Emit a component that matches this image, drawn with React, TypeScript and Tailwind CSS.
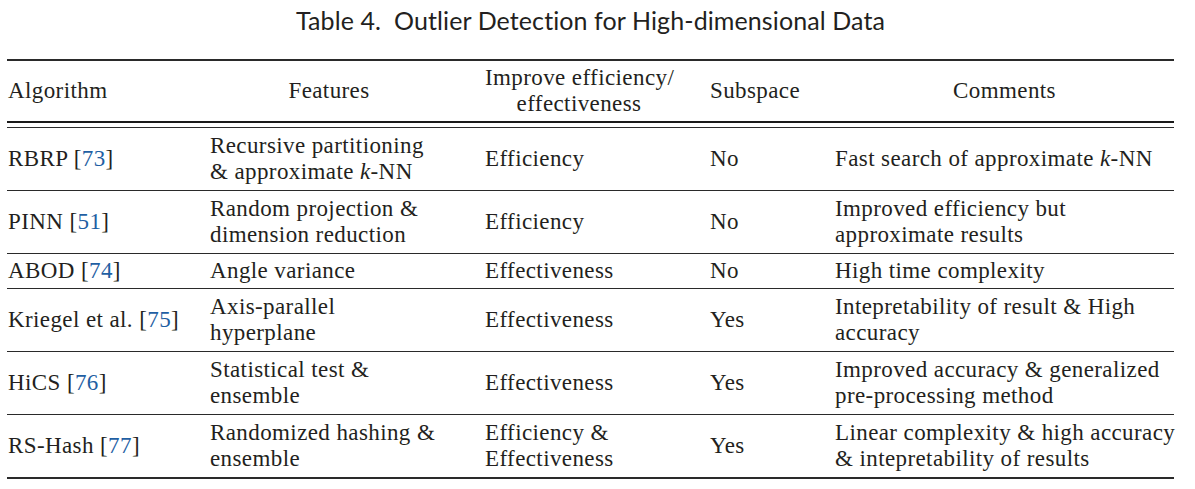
const rows = [
  {
    alg: "RBRP",
    ref: "73",
    feat: ["Recursive partitioning", <>&amp; approximate <i>k</i>-NN</>],
    imp: ["Efficiency"],
    sub: "No",
    com: [<>Fast search of approximate <i>k</i>-NN</>],
  },
  {
    alg: "PINN",
    ref: "51",
    feat: ["Random projection &", "dimension reduction"],
    imp: ["Efficiency"],
    sub: "No",
    com: ["Improved efficiency but", "approximate results"],
  },
  {
    alg: "ABOD",
    ref: "74",
    feat: ["Angle variance"],
    imp: ["Effectiveness"],
    sub: "No",
    com: ["High time complexity"],
  },
  {
    alg: "Kriegel et al.",
    ref: "75",
    feat: ["Axis-parallel", "hyperplane"],
    imp: ["Effectiveness"],
    sub: "Yes",
    com: ["Intepretability of result & High", "accuracy"],
  },
  {
    alg: "HiCS",
    ref: "76",
    feat: ["Statistical test &", "ensemble"],
    imp: ["Effectiveness"],
    sub: "Yes",
    com: ["Improved accuracy & generalized", "pre-processing method"],
  },
  {
    alg: "RS-Hash",
    ref: "77",
    feat: ["Randomized hashing &", "ensemble"],
    imp: ["Efficiency &", "Effectiveness"],
    sub: "Yes",
    com: ["Linear complexity & high accuracy", "& intepretability of results"],
  },
];

function Lines({ items }: { items: React.ReactNode[] }) {
  return (
    <div>
      {items.map((t, i) => (
        <div key={i} className="whitespace-nowrap">
          {t}
        </div>
      ))}
    </div>
  );
}

export default function App() {
  return (
    <div className="w-[1195px] h-[489px] bg-white text-[#231f20] overflow-hidden">
      <h1
        className="text-center text-[25px] leading-[30px] pt-[5px] pr-[14px] h-[59px] tracking-[0.1px]"
        style={{ fontFamily: "Lato, 'Noto Sans', sans-serif" }}
      >
        Table 4.&nbsp;&nbsp;Outlier Detection for High-dimensional Data
      </h1>

      <div
        className="ml-[7px] w-[1167px] text-[23px] leading-[26px] tracking-[0.4px]"
        style={{ fontFamily: "'Liberation Serif', 'Times New Roman', serif" }}
      >
        <div className="h-[2px] bg-[#2a2a2a]" />
        <div className="flex items-center h-[60px]">
          <div className="w-[203px] shrink-0 pl-[1px]">Algorithm</div>
          <div className="w-[275px] shrink-0">
            <div className="w-[238px] text-center">Features</div>
          </div>
          <div className="w-[225px] shrink-0">
            <div className="w-[188px] text-center whitespace-nowrap">
              <div>Improve efficiency/</div>
              <div>effectiveness</div>
            </div>
          </div>
          <div className="w-[125px] shrink-0">Subspace</div>
          <div className="flex-1 text-center">Comments</div>
        </div>
        <div className="h-[2px] bg-[#1a1a1a]" />
        <div className="h-[4px]" />
        <div className="h-[1px] bg-[#2a2a2a]" />

        {rows.map((r, i) => (
          <div
            key={i}
            className={`flex items-center border-b border-[#2a2a2a] ${
              r.feat.length === 1 && r.com.length === 1 && r.imp.length === 1 && i > 0 ? "py-[4px]" : "py-[5px]"
            } ${i === 0 ? "min-h-[63px]" : ""} ${i === rows.length - 1 ? "border-b-2" : ""}`}
          >
            <div className="w-[203px] shrink-0 pl-[1px] whitespace-nowrap">
              {r.alg} [<span className="text-[#1f5fa3]">{r.ref}</span>]
            </div>
            <div className="w-[275px] shrink-0">
              <Lines items={r.feat} />
            </div>
            <div className="w-[225px] shrink-0">
              <Lines items={r.imp} />
            </div>
            <div className="w-[125px] shrink-0">{r.sub}</div>
            <div className="flex-1 min-w-0">
              <Lines items={r.com} />
            </div>
          </div>
        ))}
      </div>
    </div>
  );
}
